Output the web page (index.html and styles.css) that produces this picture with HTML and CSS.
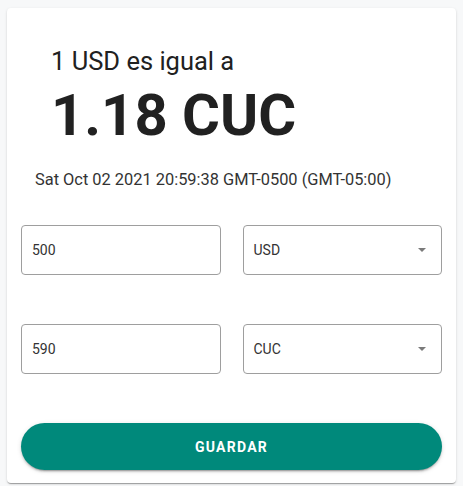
FILE: index.html
```html
<!DOCTYPE html>
<html lang="es">
<head>
<meta charset="utf-8">
<title>Conversor</title>
<link rel="stylesheet" href="styles.css">
</head>
<body>
<main class="card">
  <section class="rate">
    <p class="rate-label">1 USD es igual a</p>
    <p class="rate-value">1.18 CUC</p>
  </section>
  <p class="date">Sat Oct 02 2021 20:59:38 GMT-0500 (GMT-05:00)</p>
  <form class="form">
    <div class="row">
      <div class="field"><span class="field-text">500</span></div>
      <div class="field select"><span class="field-text">USD</span><span class="arrow"></span></div>
    </div>
    <div class="row">
      <div class="field"><span class="field-text">590</span></div>
      <div class="field select"><span class="field-text">CUC</span><span class="arrow"></span></div>
    </div>
    <button type="button" class="btn">GUARDAR</button>
  </form>
</main>
</body>
</html>
```
FILE: styles.css
```css
* { box-sizing: border-box; }
html, body { margin: 0; padding: 0; }
body {
  background: #f7f8f9;
  font-family: Roboto, "Noto Sans", sans-serif;
  padding: 8px 7px 3px 7px;
}
.card {
  background: #fff;
  border-radius: 4px;
  height: 475px;
  box-shadow: 0 2px 1px -1px rgba(0,0,0,0.2), 0 1px 1px 0 rgba(0,0,0,0.14), 0 1px 3px 0 rgba(0,0,0,0.12);
  padding: 37px 14px 14px 14px;
}
.rate { padding-left: 30px; }
.rate-label {
  margin: 0;
  font-size: 25.5px;
  line-height: 32px;
  font-weight: 400;
  color: #212121;
}
.rate-value {
  margin: 2px 0 0 0;
  font-size: 58px;
  line-height: 72px;
  font-weight: 700;
  color: #212121;
}
.date {
  margin: 17px 0 0 14px;
  font-size: 16.4px;
  line-height: 24px;
  color: #333;
}
.form {
  margin-top: 33px;
  display: flex;
  flex-direction: column;
  gap: 49px;
}
.row {
  display: grid;
  grid-template-columns: 1fr 1fr;
  gap: 22px;
}
.field {
  height: 50px;
  border: 1px solid #9e9e9e;
  border-radius: 4px;
  display: flex;
  align-items: center;
  padding: 0 10px;
  font-size: 14px;
  color: #333;
}
.field-text { flex: 1; }
.arrow {
  width: 0; height: 0;
  border-left: 4px solid transparent;
  border-right: 4px solid transparent;
  border-top: 4px solid #7a7a7a;
  margin-right: 5px;
}
.btn {
  height: 47px;
  border: none;
  border-radius: 24px;
  background: #00897b;
  color: #fff;
  font-family: Roboto, sans-serif;
  font-size: 14px;
  font-weight: 700;
  letter-spacing: 1.25px;
  box-shadow: 0 3px 1px -2px rgba(0,0,0,0.2), 0 2px 2px 0 rgba(0,0,0,0.14), 0 1px 5px 0 rgba(0,0,0,0.12);
}
```
